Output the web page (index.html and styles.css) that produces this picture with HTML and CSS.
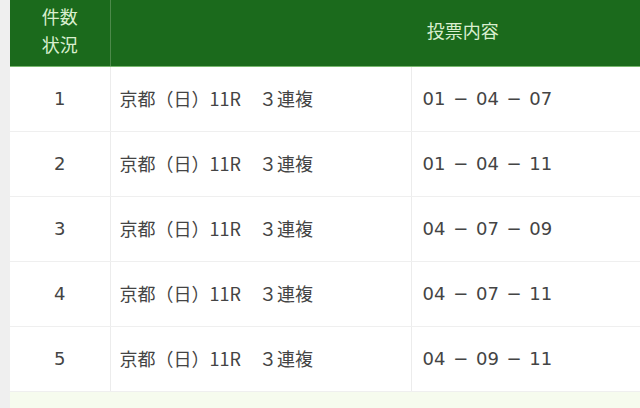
FILE: index.html
```html
<!DOCTYPE html>
<html lang="ja">
<head>
<meta charset="utf-8">
<link rel="stylesheet" href="styles.css">
</head>
<body>
<div class="page">
  <table class="bets">
    <colgroup>
      <col class="c1"><col class="c2"><col class="c3">
    </colgroup>
    <thead>
      <tr>
        <th class="num-h">件数<br>状況</th>
        <th colspan="2">投票内容</th>
      </tr>
    </thead>
    <tbody>
      <tr><td class="num">1</td><td class="race">京都（日）11R　３連複</td><td class="combo">01 − 04 − 07</td></tr>
      <tr><td class="num">2</td><td class="race">京都（日）11R　３連複</td><td class="combo">01 − 04 − 11</td></tr>
      <tr><td class="num">3</td><td class="race">京都（日）11R　３連複</td><td class="combo">04 − 07 − 09</td></tr>
      <tr><td class="num">4</td><td class="race">京都（日）11R　３連複</td><td class="combo">04 − 07 − 11</td></tr>
      <tr><td class="num">5</td><td class="race">京都（日）11R　３連複</td><td class="combo">04 − 09 − 11</td></tr>
    </tbody>
  </table>
  <div class="foot"></div>
</div>
</body>
</html>
```
FILE: styles.css
```css
html, body {
  margin: 0;
  padding: 0;
  background: #efefef;
  overflow: hidden;
  width: 640px;
  height: 408px;
}
.page {
  margin-left: 10px;
  width: 805px;
  background: #fff;
  font-family: "DejaVu Sans", "Noto Sans CJK JP", sans-serif;
  color: #444;
}
.bets {
  width: 805px;
  border-collapse: collapse;
  table-layout: fixed;
}
.c1 { width: 100px; }
.c2 { width: 301px; }
.c3 { width: 404px; }
.bets th {
  background: #1b6a1c;
  color: #d9efcf;
  font-family: "Noto Sans CJK JP", sans-serif;
  font-weight: normal;
  font-size: 18px;
  line-height: 28px;
  height: 56px;
  padding: 2px 0 8px;
  border-bottom: 1px solid #79b86f;
  text-align: center;
}
.bets th.num-h {
  border-right: 1px solid #4d8a4a;
}
.bets td {
  height: 62px;
  padding: 0 0 2px;
  border-bottom: 1px solid #efefef;
  border-right: 1px solid #ececec;
  font-size: 18px;
  vertical-align: middle;
}
.bets td.num {
  text-align: center;
}
.bets td.race {
  padding-left: 9px;
  font-family: "Noto Sans CJK JP", sans-serif;
  font-size: 18px;
}
.bets td.combo {
  padding-left: 11px;
  word-spacing: 2px;
}
.foot {
  height: 20px;
  background: #f6fbee;
}
```
